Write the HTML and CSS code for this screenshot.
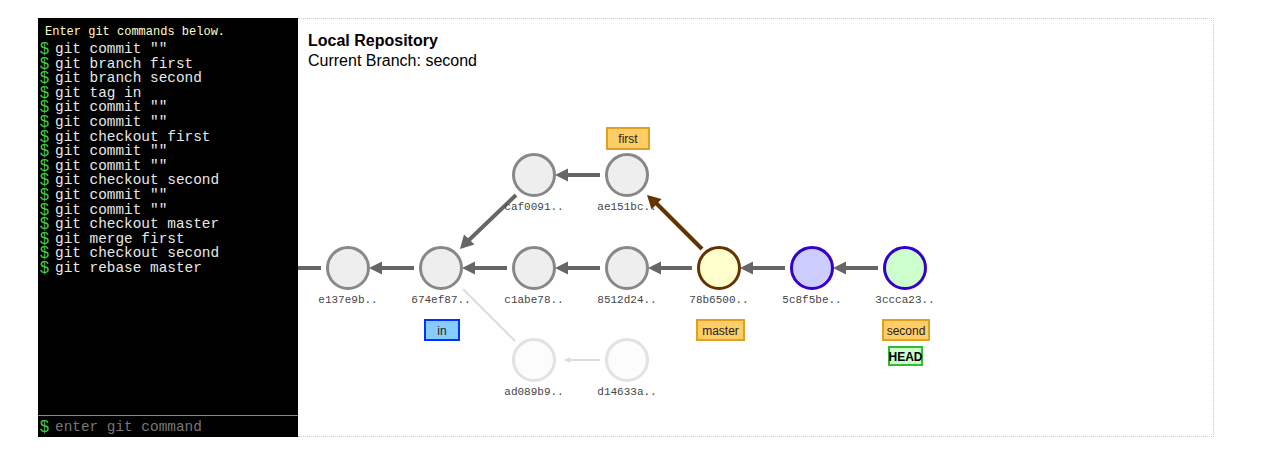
FILE: index.html
```html
<!DOCTYPE html>
<html>
<head>
<meta charset="utf-8">
<link rel="stylesheet" href="styles.css">
</head>
<body>
<div class="app">
  <div class="terminal">
    <div class="log">
      <div class="intro">Enter git commands below.</div>
      <div class="cmd"><span class="dollar">$</span>git commit ""</div>
      <div class="cmd"><span class="dollar">$</span>git branch first</div>
      <div class="cmd"><span class="dollar">$</span>git branch second</div>
      <div class="cmd"><span class="dollar">$</span>git tag in</div>
      <div class="cmd"><span class="dollar">$</span>git commit ""</div>
      <div class="cmd"><span class="dollar">$</span>git commit ""</div>
      <div class="cmd"><span class="dollar">$</span>git checkout first</div>
      <div class="cmd"><span class="dollar">$</span>git commit ""</div>
      <div class="cmd"><span class="dollar">$</span>git commit ""</div>
      <div class="cmd"><span class="dollar">$</span>git checkout second</div>
      <div class="cmd"><span class="dollar">$</span>git commit ""</div>
      <div class="cmd"><span class="dollar">$</span>git commit ""</div>
      <div class="cmd"><span class="dollar">$</span>git checkout master</div>
      <div class="cmd"><span class="dollar">$</span>git merge first</div>
      <div class="cmd"><span class="dollar">$</span>git checkout second</div>
      <div class="cmd"><span class="dollar">$</span>git rebase master</div>
    </div>
    <div class="input-row"><span class="dollar">$</span><span class="placeholder">enter git command</span></div>
  </div>
  <div class="repo">
    <div class="repo-head">
      <div class="repo-title">Local Repository</div>
      <div class="repo-branch">Current Branch: second</div>
    </div>
    <svg class="graph" width="916" height="419" viewBox="0 0 916 419" xmlns="http://www.w3.org/2000/svg">
      <!-- edges -->
      <g stroke="#666" stroke-width="4" fill="#666">
        <line x1="0" y1="249" x2="23" y2="249"/>
        <line x1="116" y1="249" x2="82" y2="249"/>
        <polygon points="71,249 84,242.5 84,255.5" stroke="none"/>
        <line x1="209" y1="249" x2="175" y2="249"/>
        <polygon points="164,249 177,242.5 177,255.5" stroke="none"/>
        <line x1="302" y1="249" x2="268" y2="249"/>
        <polygon points="257,249 270,242.5 270,255.5" stroke="none"/>
        <line x1="394" y1="249" x2="361" y2="249"/>
        <polygon points="350,249 363,242.5 363,255.5" stroke="none"/>
        <line x1="487" y1="249" x2="453" y2="249"/>
        <polygon points="442,249 455,242.5 455,255.5" stroke="none"/>
        <line x1="580" y1="249" x2="546" y2="249"/>
        <polygon points="535,249 548,242.5 548,255.5" stroke="none"/>
        <line x1="302" y1="156" x2="268" y2="156"/>
        <polygon points="257,156 270,149.5 270,162.5" stroke="none"/>
        <line x1="218" y1="176" x2="170" y2="222"/>
        <polygon points="162,230 166,215.5 176.5,225.5" stroke="none"/>
      </g>
      <g stroke="#663300" stroke-width="4" fill="#663300">
        <line x1="404" y1="230" x2="357" y2="183"/>
        <polygon points="349,176 363.5,180 353.5,190.5" stroke="none"/>
      </g>
      <g stroke="#ddd" stroke-width="2" fill="#ddd">
        <line x1="217" y1="322" x2="165" y2="270"/>
        <line x1="302" y1="341" x2="270" y2="341"/>
        <polygon points="266,341 272,338 272,344" stroke="none"/>
      </g>
      <!-- nodes -->
      <g stroke-width="3">
        <circle cx="50" cy="249" r="20.5" fill="#eee" stroke="#888"/>
        <circle cx="143" cy="249" r="20.5" fill="#eee" stroke="#888"/>
        <circle cx="236" cy="249" r="20.5" fill="#eee" stroke="#888"/>
        <circle cx="329" cy="249" r="20.5" fill="#eee" stroke="#888"/>
        <circle cx="421" cy="249" r="20.5" fill="#ffffcc" stroke="#663300"/>
        <circle cx="514" cy="249" r="20.5" fill="#ccccff" stroke="#3300cc"/>
        <circle cx="607" cy="249" r="20.5" fill="#ccffcc" stroke="#3300cc"/>
        <circle cx="236" cy="156" r="20.5" fill="#eee" stroke="#888"/>
        <circle cx="329" cy="156" r="20.5" fill="#eee" stroke="#888"/>
        <circle cx="236" cy="341" r="20.5" fill="#fcfcfc" stroke="#e2e2e2"/>
        <circle cx="329" cy="341" r="20.5" fill="#fcfcfc" stroke="#e2e2e2"/>
      </g>
      <!-- commit ids -->
      <g class="sha" text-anchor="middle">
        <text x="50" y="284">e137e9b..</text>
        <text x="143" y="284">674ef87..</text>
        <text x="236" y="284">c1abe78..</text>
        <text x="329" y="284">8512d24..</text>
        <text x="421" y="284">78b6500..</text>
        <text x="514" y="284">5c8f5be..</text>
        <text x="607" y="284">3ccca23..</text>
        <text x="236" y="191">caf0091..</text>
        <text x="329" y="191">ae151bc..</text>
        <text x="236" y="376">ad089b9..</text>
        <text x="329" y="376">d14633a..</text>
      </g>
      <!-- refs -->
      <g class="ref">
        <rect x="309" y="109" width="42" height="21" fill="#ffcc66" stroke="#e0a020" stroke-width="2"/>
        <text x="330" y="124" text-anchor="middle">first</text>
        <rect x="127" y="301" width="34" height="20" fill="#88ccff" stroke="#0033ff" stroke-width="2"/>
        <text x="144" y="315.5" text-anchor="middle">in</text>
        <rect x="399" y="301" width="47" height="20" fill="#ffcc66" stroke="#e0a020" stroke-width="2"/>
        <text x="422.5" y="315.5" text-anchor="middle">master</text>
        <rect x="585" y="301" width="46" height="20" fill="#ffcc66" stroke="#e0a020" stroke-width="2"/>
        <text x="608" y="315.5" text-anchor="middle">second</text>
        <rect x="591" y="328" width="33" height="18" fill="#ccffcc" stroke="#33bb33" stroke-width="2"/>
        <text class="head" x="607.5" y="341.5" text-anchor="middle">HEAD</text>
      </g>
    </svg>
  </div>
</div>
</body>
</html>
```
FILE: styles.css
```css
html, body {
  margin: 0;
  padding: 0;
  background: #fff;
}

.app {
  display: flex;
  padding: 18px 0 0 38px;
  height: 419px;
}

.terminal {
  width: 260px;
  height: 419px;
  background: #000;
  display: flex;
  flex-direction: column;
  box-sizing: border-box;
}

.log {
  flex: 1;
  padding: 7px 0 0 2px;
  font-family: "Liberation Mono", monospace;
}

.intro {
  color: #ffffcc;
  font-size: 12px;
  line-height: 14px;
  padding-left: 5px;
  margin-bottom: 3px;
}

.cmd {
  color: #e8e8e8;
  font-size: 14.4px;
  line-height: 14.6px;
  height: 14.6px;
  white-space: pre;
  overflow: visible;
}

.dollar {
  display: inline-block;
  width: 15px;
  color: #44cc44;
  font-family: "Liberation Sans", sans-serif;
  font-size: 16px;
  line-height: 14px;
  vertical-align: top;
}

.input-row {
  border-top: 1px solid #888;
  height: 21px;
  display: flex;
  align-items: center;
  padding-left: 2px;
  font-family: "Liberation Mono", monospace;
}

.input-row .dollar {
  line-height: 21px;
  vertical-align: middle;
}

.placeholder {
  color: #777;
  font-size: 14.4px;
}

.repo {
  position: relative;
  width: 916px;
  height: 419px;
  box-sizing: border-box;
  border-top: 1px dotted #ccc;
  border-right: 1px dotted #ccc;
  border-bottom: 1px dotted #ccc;
}

.repo-head {
  padding: 12px 0 0 10px;
  font-family: "Liberation Sans", Arial, sans-serif;
  font-size: 16px;
  line-height: 20px;
  color: #000;
}

.repo-title {
  font-weight: bold;
}

.graph {
  position: absolute;
  left: 0;
  top: 0;
}

.sha {
  font-family: "Liberation Mono", monospace;
  font-size: 11px;
  fill: #444;
}

.ref text {
  font-family: "Liberation Sans", Arial, sans-serif;
  font-size: 12px;
  fill: #222;
}

.ref text.head {
  font-weight: bold;
  fill: #000;
}
```
